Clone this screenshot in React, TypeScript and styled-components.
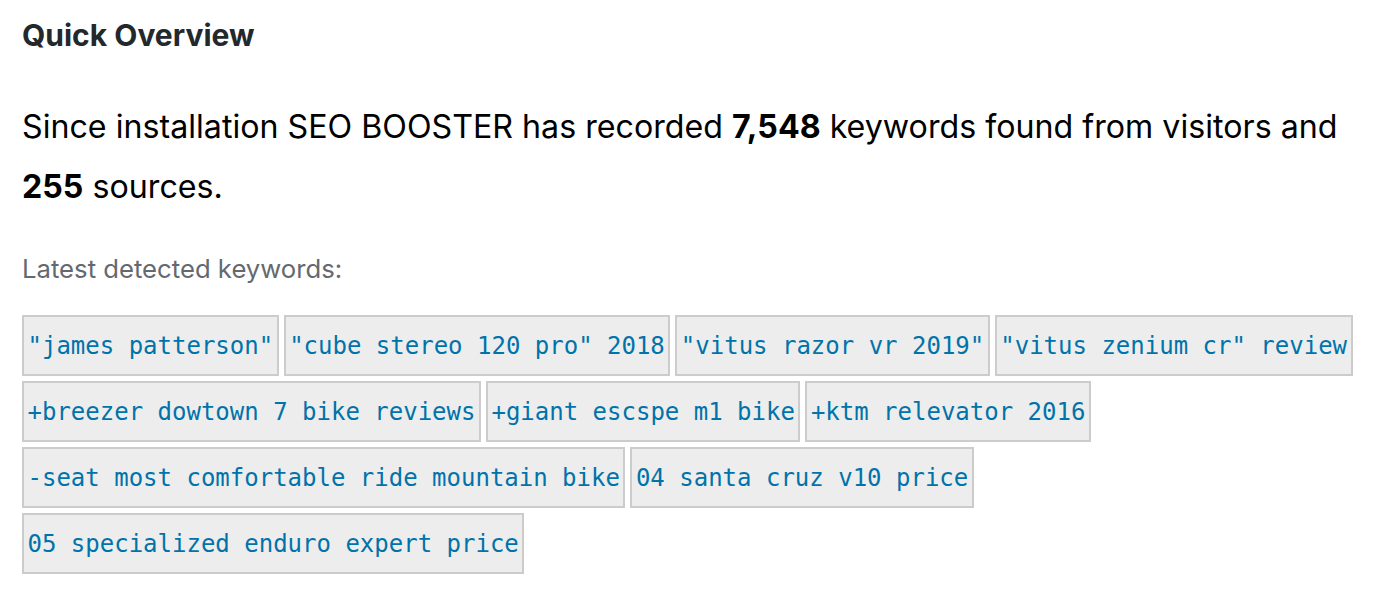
import React from 'react';
import styled, { createGlobalStyle } from 'styled-components';

const GlobalStyle = createGlobalStyle`
  html, body {
    margin: 0;
    padding: 0;
    background: #fff;
  }
  body {
    font-family: Inter, 'Liberation Sans', Arial, sans-serif;
  }
`;

const Page = styled.div`
  width: 1346px;
  padding: 0 0 0 22px;
`;

const Title = styled.h2`
  margin: 0;
  padding-top: 15px;
  font-size: 30px;
  line-height: 40px;
  font-weight: 700;
  color: #23282d;
`;

const Summary = styled.p`
  margin: 42px 0 0;
  font-size: 32.2px;
  line-height: 60px;
  color: #000;
`;

const Label = styled.p`
  margin: 36px 0 0;
  font-size: 25.7px;
  line-height: 32px;
  color: #646970;
`;

const KeywordList = styled.div`
  display: flex;
  flex-wrap: wrap;
  gap: 5px;
  margin-top: 30px;
`;

const Keyword = styled.code`
  display: block;
  padding: 1px 3.5px 0;
  border: 2px solid #cccccc;
  background: #ededed;
  color: #0073aa;
  font-family: 'DejaVu Sans Mono', 'Liberation Mono', monospace;
  font-size: 24px;
  line-height: 56px;
  white-space: pre;
`;

const keywords = [
  '"james patterson"',
  '"cube stereo 120 pro" 2018',
  '"vitus razor vr 2019"',
  '"vitus zenium cr" review',
  '+breezer dowtown 7 bike reviews',
  '+giant escspe m1 bike',
  '+ktm relevator 2016',
  '-seat most comfortable ride mountain bike',
  '04 santa cruz v10 price',
  '05 specialized enduro expert price',
];

export default function App() {
  return (
    <>
      <GlobalStyle />
      <Page>
        <Title>Quick Overview</Title>
        <Summary>
          Since installation SEO BOOSTER has recorded <strong>7,548</strong> keywords
          found from visitors and <strong>255</strong> sources.
        </Summary>
        <Label>Latest detected keywords:</Label>
        <KeywordList>
          {keywords.map((k) => (
            <Keyword key={k}>{k}</Keyword>
          ))}
        </KeywordList>
      </Page>
    </>
  );
}
